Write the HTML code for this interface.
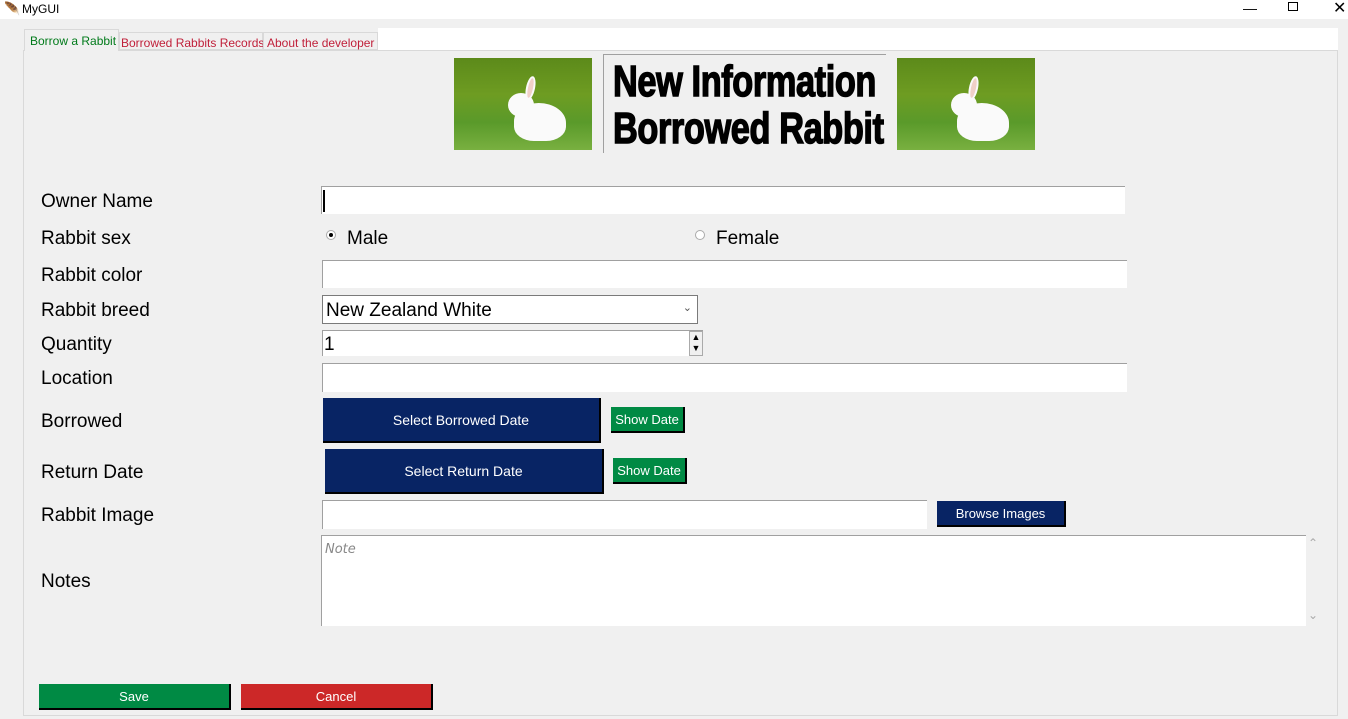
<!DOCTYPE html>
<html><head><meta charset="utf-8"><style>
*{margin:0;padding:0;box-sizing:border-box}
body{width:1348px;height:719px;background:#f0f0f0;position:relative;overflow:hidden;font-family:"Liberation Sans",sans-serif}
.a{position:absolute}
.lbl{position:absolute;left:41px;font-size:19px;color:#000}
.ent{position:absolute;background:#fff;border-top:1px solid #a0a0a0;border-left:1px solid #a0a0a0}
.btn{position:absolute;color:#fff;display:flex;align-items:center;justify-content:center;border-right:2px solid #000;border-bottom:2px solid #000}
.nb{background:#082464;font-size:14px}
.gb{background:#008a44;font-size:13px}
.img{position:absolute;width:138px;height:92px;background:linear-gradient(180deg,#5c8a1a 0%,#6e9c22 40%,#5a9a2a 70%,#79b040 100%);overflow:hidden}
.img .b{position:absolute;left:60px;top:45px;width:52px;height:38px;background:#fafafa;border-radius:50% 55% 40% 40%}
.img .h{position:absolute;left:54px;top:35px;width:26px;height:24px;background:#fafafa;border-radius:50%}
.img .e{position:absolute;left:72px;top:18px;width:9px;height:24px;background:#f0d0c8;border-radius:50%;transform:rotate(12deg);border:2px solid #fafafa}
.title{position:absolute;left:603px;top:54px;width:283px;height:99px;border-top:1px solid #a0a0a0;border-left:1px solid #a0a0a0;background:#f0f0f0;overflow:hidden}
.title div{position:absolute;left:9px;top:3px;font-weight:bold;font-size:44px;line-height:47px;color:#000;white-space:nowrap;transform:scaleX(0.78);transform-origin:0 0;letter-spacing:-0.5px;-webkit-text-stroke:1.5px #000}
.tab{position:absolute;white-space:nowrap;font-size:12px}
</style></head><body>
<div class="a" style="left:0;top:0;width:1348px;height:19px;background:#fff"></div>
<div class="a" style="left:4px;top:1px;font-size:13px">&#x1FAB6;</div>
<div class="a" style="left:22px;top:2px;font-size:12px;color:#000">MyGUI</div>
<div class="a" style="left:1243px;top:0;font-size:14px">&#8212;</div>
<div class="a" style="left:1288px;top:2px;width:10px;height:9px;border:1px solid #000"></div>
<div class="a" style="left:1333px;top:-2px;font-size:16px">&#10005;</div>
<div class="a" style="left:23px;top:50px;width:1315px;height:666px;border:1px solid #d9d9d9;background:#f0f0f0"></div>
<div class="tab" style="left:24px;top:29px;width:95px;height:22px;background:#f0f0f0;border:1px solid #d9d9d9;border-bottom:none;color:#007a1a;padding:4px 0 0 5px">Borrow a Rabbit</div>
<div class="tab" style="left:119px;top:32px;width:144px;height:18px;border:1px solid #d9d9d9;color:#c0203a;padding:3px 0 0 1px;background:#f0f0f0">Borrowed Rabbits Records</div>
<div class="tab" style="left:263px;top:32px;width:115px;height:18px;border:1px solid #d9d9d9;color:#c0203a;padding:3px 0 0 3px;background:#f0f0f0">About the developer</div>
<div class="a" style="left:378px;top:28px;width:960px;height:22px;background:#fff"></div>

<div class="img" style="left:454px;top:58px"><div class="b"></div><div class="h"></div><div class="e"></div></div>
<div class="title"><div>New Information<br>Borrowed Rabbit</div></div>
<div class="img" style="left:897px;top:58px"><div class="b"></div><div class="h"></div><div class="e"></div></div>

<div class="lbl" style="top:191px">Owner Name</div>
<div class="lbl" style="top:228px">Rabbit sex</div>
<div class="lbl" style="top:265px">Rabbit color</div>
<div class="lbl" style="top:300px">Rabbit breed</div>
<div class="lbl" style="top:334px">Quantity</div>
<div class="lbl" style="top:368px">Location</div>
<div class="lbl" style="top:411px">Borrowed</div>
<div class="lbl" style="top:462px">Return Date</div>
<div class="lbl" style="top:505px">Rabbit Image</div>
<div class="lbl" style="top:571px">Notes</div>

<div class="ent" style="left:321px;top:186px;width:804px;height:28px"><div class="a" style="left:1px;top:3px;width:2px;height:22px;background:#000"></div></div>
<div class="a" style="left:326px;top:230px;width:10px;height:10px;border-radius:50%;border:1px solid #aaa;background:#fff"><div class="a" style="left:2px;top:2px;width:4px;height:4px;border-radius:50%;background:#000"></div></div>
<div class="a" style="left:347px;top:228px;font-size:19px">Male</div>
<div class="a" style="left:695px;top:230px;width:10px;height:10px;border-radius:50%;border:1px solid #aaa;background:#fff"></div>
<div class="a" style="left:716px;top:228px;font-size:19px">Female</div>
<div class="ent" style="left:322px;top:260px;width:805px;height:28px"></div>
<div class="a" style="left:322px;top:295px;width:376px;height:29px;background:#fff;border:1px solid #7a7a7a;font-size:19px;padding:4px 0 0 3px">New Zealand White<span class="a" style="right:5px;top:5px;font-size:11px;color:#555">&#8964;</span></div>
<div class="ent" style="left:322px;top:330px;width:381px;height:26px;font-size:19px;padding:3px 0 0 1px">1<div class="a" style="right:0;top:0;width:14px;height:25px;border:1px solid #aaa;background:#f0f0f0;font-size:9px;line-height:11px;text-align:center">&#9650;<br>&#9660;</div></div>
<div class="ent" style="left:322px;top:363px;width:805px;height:29px"></div>

<div class="btn nb" style="left:323px;top:398px;width:278px;height:45px">Select Borrowed Date</div>
<div class="btn gb" style="left:611px;top:407px;width:74px;height:26px">Show Date</div>
<div class="btn nb" style="left:325px;top:449px;width:279px;height:45px">Select Return Date</div>
<div class="btn gb" style="left:613px;top:458px;width:74px;height:26px">Show Date</div>

<div class="ent" style="left:322px;top:500px;width:605px;height:29px"></div>
<div class="btn nb" style="left:937px;top:501px;width:129px;height:26px;font-size:13px">Browse Images</div>

<div class="ent" style="left:321px;top:535px;width:985px;height:91px;font-family:'DejaVu Sans',sans-serif;font-style:italic;font-size:13px;color:#888;padding:6px 0 0 3px">Note</div>
<div class="a" style="left:1308px;top:536px;font-size:12px;color:#aaa">&#8963;</div>
<div class="a" style="left:1308px;top:608px;font-size:12px;color:#aaa">&#8964;</div>

<div class="btn" style="left:39px;top:684px;width:192px;height:26px;background:#008a44;font-size:13px">Save</div>
<div class="btn" style="left:241px;top:684px;width:192px;height:26px;background:#cc2828;font-size:13px">Cancel</div>
</body></html>
